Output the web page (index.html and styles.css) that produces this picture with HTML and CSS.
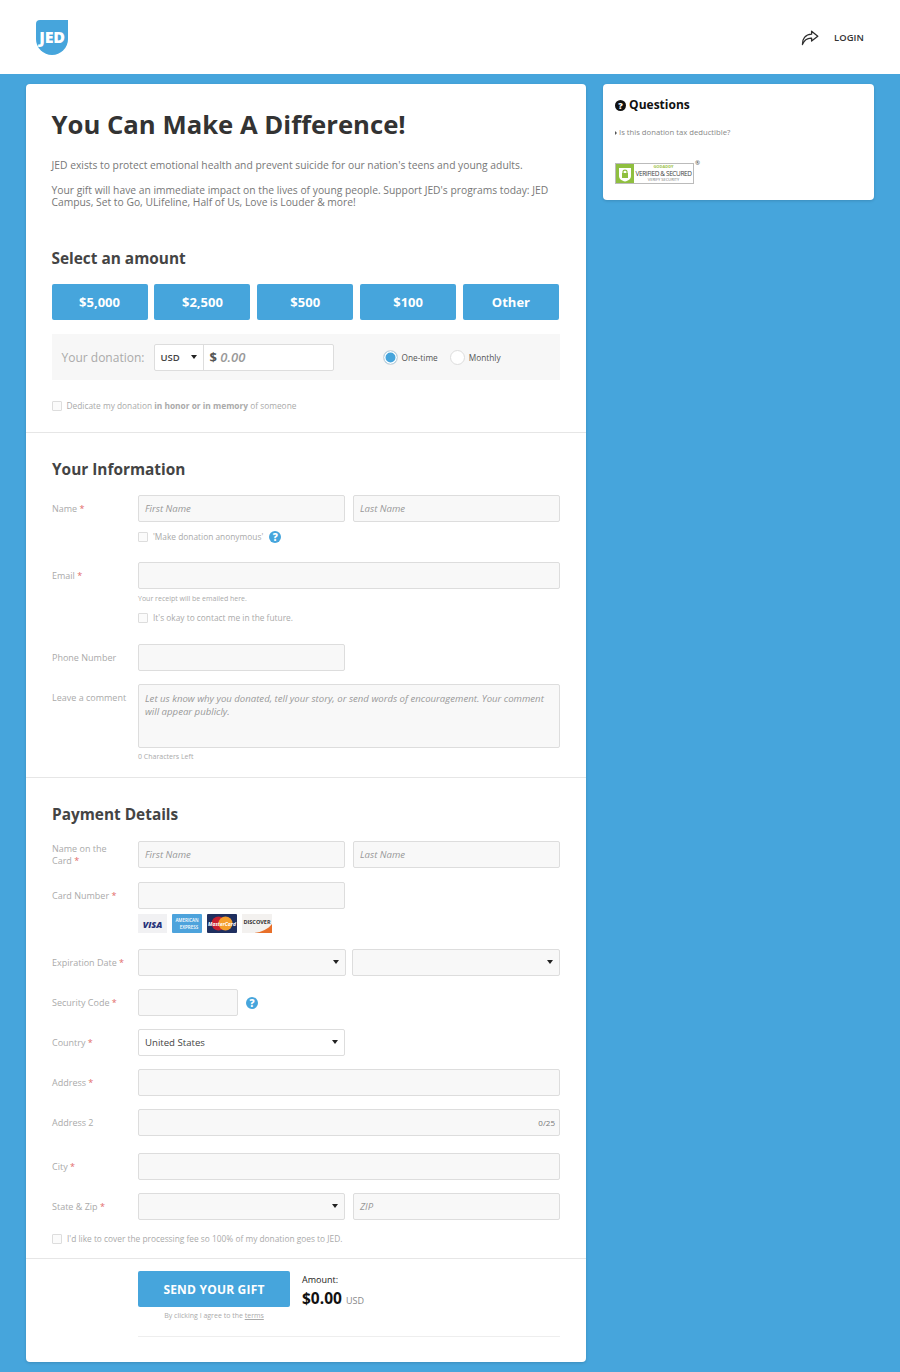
FILE: index.html
```html
<!DOCTYPE html>
<html lang="en">
<head>
    <meta charset="UTF-8">
    <meta name="viewport" content="width=device-width, initial-scale=1.0">
    <title>You Can Make A Difference!</title>
    <link rel="stylesheet" href="styles.css">
</head>
<body>

    <header class="top-bar">
        <div class="logo"><span>JED</span></div>
        <div class="top-links">
            <svg class="share-icon" width="18" height="16" viewBox="0 0 18 16">
                <path d="M10.6 1.2 L16.8 6.3 L10.6 11 L10.6 8.2 C6.6 8 3.4 9.6 1.4 14.6 C1 9 4.4 4.4 10.6 4.2 Z" fill="none" stroke="#2d2d2d" stroke-width="1.3" stroke-linejoin="round"/>
            </svg>
            <a class="login-link">LOGIN</a>
        </div>
    </header>

    <div class="page">
        <main class="card main-card">
            <section class="intro">
                <h1>You Can Make A Difference!</h1>
                <p>JED exists to protect emotional health and prevent suicide for our nation's teens and young adults.</p>
                <p>Your gift will have an immediate impact on the lives of young people. Support JED's programs today: JED Campus, Set to Go, ULifeline, Half of Us, Love is Louder &amp; more!</p>

                <h2 class="amount-title">Select an amount</h2>
                <div class="amounts">
                    <button class="amount-btn">$5,000</button>
                    <button class="amount-btn">$2,500</button>
                    <button class="amount-btn">$500</button>
                    <button class="amount-btn">$100</button>
                    <button class="amount-btn">Other</button>
                </div>

                <div class="donation-box">
                    <span class="donation-label">Your donation:</span>
                    <div class="donation-input">
                        <div class="currency">USD <i class="caret"></i></div>
                        <div class="donation-value"><b>$</b> <em>0.00</em></div>
                    </div>
                    <div class="frequency">
                        <span class="radio radio-on"></span><span class="radio-label">One-time</span>
                        <span class="radio"></span><span class="radio-label">Monthly</span>
                    </div>
                </div>

                <label class="check dedicate"><span class="box"></span><span>Dedicate my donation <b>in honor or in memory</b> of someone</span></label>
            </section>

            <section class="info">
                <h2>Your Information</h2>

                <div class="row">
                    <label class="field-label">Name <i>*</i></label>
                    <div class="field-pair">
                        <div class="input ph">First Name</div>
                        <div class="input ph">Last Name</div>
                    </div>
                </div>
                <label class="check check-anon"><span class="box"></span><span>'Make donation anonymous'</span><span class="help">?</span></label>

                <div class="row row-email">
                    <label class="field-label">Email <i>*</i></label>
                    <div class="input"></div>
                </div>
                <div class="hint hint-email">Your receipt will be emailed here.</div>
                <label class="check check-contact"><span class="box"></span><span>It's okay to contact me in the future.</span></label>

                <div class="row row-phone">
                    <label class="field-label">Phone Number</label>
                    <div class="input half"></div>
                </div>

                <div class="row row-comment">
                    <label class="field-label">Leave a comment</label>
                    <div class="input textarea ph">Let us know why you donated, tell your story, or send words of encouragement. Your comment will appear publicly.</div>
                </div>
                <div class="hint hint-chars">0 Characters Left</div>
            </section>

            <section class="payment">
                <h2>Payment Details</h2>

                <div class="row">
                    <label class="field-label label-wrap">Name on the<br>Card <i>*</i></label>
                    <div class="field-pair">
                        <div class="input ph">First Name</div>
                        <div class="input ph">Last Name</div>
                    </div>
                </div>

                <div class="row row-card">
                    <label class="field-label">Card Number <i>*</i></label>
                    <div class="input half"></div>
                </div>
                <div class="card-logos">
                    <svg width="29" height="19" viewBox="0 0 29 19">
                        <rect width="29" height="19" fill="#f1f1f3"/>
                        <text class="logo-visa" x="14.5" y="13.5" text-anchor="middle">VISA</text>
                    </svg>
                    <svg width="30" height="19" viewBox="0 0 30 19">
                        <rect width="30" height="19" rx="1" fill="#4da3dc"/>
                        <text class="logo-amex" x="15" y="8" text-anchor="middle">AMERICAN</text>
                        <text class="logo-amex" x="17" y="15" text-anchor="middle">EXPRESS</text>
                    </svg>
                    <svg width="30" height="19" viewBox="0 0 30 19">
                        <rect width="30" height="19" rx="1" fill="#1f2f5f"/>
                        <circle cx="11.5" cy="9.5" r="7" fill="#c9202f"/>
                        <circle cx="18.5" cy="9.5" r="7" fill="#f59e2c"/>
                        <text class="logo-mc" x="15" y="11.5" text-anchor="middle">MasterCard</text>
                    </svg>
                    <svg width="30" height="19" viewBox="0 0 30 19">
                        <rect width="30" height="19" fill="#f3f1ef"/>
                        <path d="M30 10 L30 19 L12 19 C20 18 26 15 30 10 Z" fill="#e8702a"/>
                        <text class="logo-disc" x="15" y="9.5" text-anchor="middle">DISCOVER</text>
                    </svg>
                </div>

                <div class="row row-exp">
                    <label class="field-label">Expiration Date <i>*</i></label>
                    <div class="field-pair pair-tight">
                        <div class="input select"><i class="caret"></i></div>
                        <div class="input select"><i class="caret"></i></div>
                    </div>
                </div>

                <div class="row row-next">
                    <label class="field-label">Security Code <i>*</i></label>
                    <div class="input cvv"></div>
                    <span class="help help-cvv">?</span>
                </div>

                <div class="row row-next">
                    <label class="field-label">Country <i>*</i></label>
                    <div class="input half select country">United States <i class="caret"></i></div>
                </div>

                <div class="row row-next">
                    <label class="field-label">Address <i>*</i></label>
                    <div class="input"></div>
                </div>

                <div class="row row-next">
                    <label class="field-label">Address 2</label>
                    <div class="input counted"><span>0/25</span></div>
                </div>

                <div class="row row-city">
                    <label class="field-label">City <i>*</i></label>
                    <div class="input"></div>
                </div>

                <div class="row row-next">
                    <label class="field-label">State &amp; Zip <i>*</i></label>
                    <div class="field-pair">
                        <div class="input select"><i class="caret"></i></div>
                        <div class="input ph">ZIP</div>
                    </div>
                </div>

                <label class="check check-fee"><span class="box"></span><span>I'd like to cover the processing fee so 100% of my donation goes to JED.</span></label>
            </section>

            <section class="submit">
                <div class="submit-row">
                    <div>
                        <button class="send-btn">SEND YOUR GIFT</button>
                        <div class="terms">By clicking I agree to the <u>terms</u></div>
                    </div>
                    <div class="total">
                        <div class="total-label">Amount:</div>
                        <div class="total-value"><b>$0.00</b> <span>USD</span></div>
                    </div>
                </div>
                <div class="submit-line"></div>
            </section>
        </main>

        <aside class="card side-card">
            <h3><span class="help help-dark">?</span> Questions</h3>
            <a class="faq"><i class="faq-arrow"></i>Is this donation tax deductible?</a>
            <div class="seal">
                <div class="seal-lock">
                    <svg width="14" height="16" viewBox="0 0 14 16">
                        <path d="M1 2 L13 2 L13 10 C13 13 10 15 7 15.5 C4 15 1 13 1 10 Z" fill="#fff"/>
                        <rect x="4" y="7" width="6" height="5" fill="#8fbf3f"/>
                        <path d="M5 7 L5 5.4 C5 3.6 9 3.6 9 5.4 L9 7" fill="none" stroke="#8fbf3f" stroke-width="1.2"/>
                    </svg>
                </div>
                <div class="seal-text">
                    <span class="seal-top">GODADDY</span>
                    <span class="seal-mid">VERIFIED &amp; SECURED</span>
                    <span class="seal-bot">VERIFY SECURITY</span>
                </div>
                <span class="seal-reg">®</span>
            </div>
        </aside>
    </div>

</body>
</html>
```

FILE: styles.css
```css
* {
    box-sizing: border-box;
}

body {
    margin: 0;
    font-family: "Open Sans", sans-serif;
    background-color: #46a5dc;
    color: #777;
}

h1, h2, h3, p {
    margin: 0;
}

button {
    font-family: inherit;
    border: none;
}

.top-bar {
    height: 74px;
    background-color: #fff;
    display: flex;
    justify-content: space-between;
    padding: 20px 36px 0 36px;
}

.logo {
    width: 32px;
    height: 35px;
    background-color: #46a5dc;
    border-radius: 4px 0 16px 16px;
    display: flex;
    align-items: center;
    justify-content: center;
    padding-bottom: 2px;
}

.logo span {
    color: #fff;
    font-size: 16px;
    font-weight: 800;
    letter-spacing: -0.2px;
}

.top-links {
    display: flex;
    align-items: flex-start;
    padding-top: 10px;
}

.login-link {
    margin-left: 15px;
    font-size: 9.4px;
    font-weight: 600;
    line-height: 15px;
    color: #333;
    letter-spacing: 0.1px;
}

.page {
    display: flex;
    align-items: flex-start;
    padding: 10px 26px;
    gap: 17px;
}

.card {
    background-color: #fff;
    border-radius: 4px;
    box-shadow: 0 1px 3px rgba(0, 0, 0, 0.15);
}

.main-card {
    width: 560px;
    height: 1278px;
}

.side-card {
    width: 271px;
    height: 116px;
    padding: 13px 12px 0 12px;
}

.intro {
    height: 349px;
    padding: 23px 26px 0 25.5px;
    border-bottom: 1px solid #e6e6e6;
}

.intro h1 {
    font-size: 25.7px;
    line-height: 36px;
    font-weight: 700;
    color: #333;
    margin-bottom: 16px;
}

.intro p {
    font-size: 10.3px;
    line-height: 12px;
    color: #777;
    margin-bottom: 13px;
}

h2 {
    font-size: 15.4px;
    line-height: 22px;
    font-weight: 700;
    color: #444;
}

.amount-title {
    margin-top: 40px;
}

.amounts {
    display: flex;
    gap: 6.75px;
    margin-top: 14px;
    margin-right: 1px;
}

.amount-btn {
    flex: 1;
    height: 36px;
    background-color: #46a5dc;
    color: #fff;
    font-size: 13px;
    font-weight: 700;
    border-radius: 2px;
}

.donation-box {
    display: flex;
    align-items: center;
    height: 46px;
    margin-top: 14px;
    padding: 0 10px;
    background-color: #f7f7f7;
}

.donation-label {
    width: 92px;
    font-size: 12px;
    color: #aaa;
}

.donation-input {
    display: flex;
    width: 180px;
    height: 27px;
    background-color: #fff;
    border: 1px solid #ddd;
    border-radius: 2px;
}

.currency {
    width: 49px;
    font-size: 9.5px;
    font-weight: 600;
    color: #444;
    line-height: 25px;
    padding-left: 6px;
    border-right: 1px solid #ddd;
    position: relative;
}

.currency .caret {
    right: 6px;
    top: 10px;
}

.donation-value {
    font-size: 13px;
    line-height: 25px;
    padding-left: 6px;
    color: #555;
}

.donation-value em {
    color: #999;
    font-weight: 600;
}

.frequency {
    display: flex;
    align-items: center;
    margin-left: 49px;
}

.radio {
    width: 15px;
    height: 15px;
    border-radius: 50%;
    background-color: #fff;
    border: 1px solid #ddd;
    margin-right: 4px;
}

.radio-on {
    background-color: #46a5dc;
    box-shadow: inset 0 0 0 1.5px #fff;
}

.radio-label {
    font-size: 8.3px;
    color: #555;
    margin-right: 12px;
}

.caret {
    position: absolute;
    width: 0;
    height: 0;
    border-left: 3.5px solid transparent;
    border-right: 3.5px solid transparent;
    border-top: 4px solid #222;
}

.check {
    display: flex;
    align-items: center;
    font-size: 8.35px;
    line-height: 12px;
    color: #aaa;
}

.box {
    width: 10px;
    height: 10px;
    border: 1px solid #ddd;
    border-radius: 1px;
    background-color: #fbfbfb;
    margin-right: 5px;
    flex: none;
}

.dedicate {
    margin-top: 20px;
}

.info {
    height: 345px;
    padding: 26px 26px 0 26px;
    border-bottom: 1px solid #e6e6e6;
}

.info h2 {
    margin-bottom: 14px;
}

.row {
    display: flex;
    align-items: flex-start;
}

.field-label {
    width: 86px;
    flex: none;
    font-size: 9px;
    line-height: 12px;
    color: #aaa;
    padding-top: 8px;
}

.field-label i {
    color: #e26a6a;
    font-style: normal;
}

.label-wrap {
    padding-top: 2px;
}

.field-pair {
    display: flex;
    gap: 8px;
    flex: 1;
}

.pair-tight {
    gap: 6px;
}

.input {
    flex: 1;
    height: 27px;
    background-color: #f8f8f8;
    border: 1px solid #ddd;
    border-radius: 2px;
    font-size: 9.6px;
    line-height: 26px;
    padding: 0 6px;
    position: relative;
}

.half {
    flex: none;
    width: 207px;
}

.cvv {
    flex: none;
    width: 100px;
}

.ph {
    color: #999;
    font-style: italic;
}

.textarea {
    height: 64px;
    line-height: 13px;
    padding-top: 7px;
}

.select .caret {
    right: 6px;
    top: 10px;
}

.country {
    background-color: #fff;
    color: #444;
}

.counted {
    text-align: right;
    font-size: 8px;
    padding-right: 4px;
    color: #777;
}

.check-anon {
    margin: 9px 0 0 86px;
}

.row-email {
    margin-top: 19px;
}

.hint {
    font-size: 7px;
    line-height: 10px;
    color: #aaa;
    margin-left: 86px;
}

.hint-email {
    margin-top: 5px;
}

.check-contact {
    margin: 8px 0 0 86px;
}

.row-phone {
    margin-top: 20px;
}

.row-comment {
    margin-top: 13px;
}

.hint-chars {
    margin-top: 4px;
}

.help {
    display: inline-block;
    width: 12px;
    height: 12px;
    margin-left: 6px;
    border-radius: 50%;
    background-color: #46a5dc;
    color: #fff;
    font-size: 10px;
    line-height: 12px;
    font-weight: 800;
    text-align: center;
}

.help-cvv {
    margin: 8px 0 0 8px;
}

.help-dark {
    margin-left: 0;
    width: 11px;
    height: 11px;
    line-height: 11px;
    background-color: #111;
    font-size: 9px;
}

.payment {
    height: 481px;
    padding: 26px 26px 0 26px;
    border-bottom: 1px solid #e6e6e6;
}

.payment h2 {
    margin-bottom: 15px;
}

.row-card {
    margin-top: 14px;
}

.card-logos {
    display: flex;
    gap: 5px;
    margin: 5px 0 0 86px;
}

.logo-visa {
    font: italic 800 9px "Open Sans", sans-serif;
    fill: #27337a;
}

.logo-amex {
    font: 600 4.5px "Open Sans", sans-serif;
    fill: #fff;
}

.logo-mc {
    font: italic 700 5px "Open Sans", sans-serif;
    fill: #fff;
}

.logo-disc {
    font: 700 5.5px "Open Sans", sans-serif;
    fill: #333;
}

.row-exp {
    margin-top: 16px;
}

.row-next {
    margin-top: 13px;
}

.row-city {
    margin-top: 17px;
}

.check-fee {
    margin-top: 13px;
}

.submit {
    padding: 12px 26px 0 112px;
}

.submit-row {
    display: flex;
    align-items: flex-start;
}

.send-btn {
    display: block;
    width: 152px;
    height: 36px;
    background-color: #46a5dc;
    color: #fff;
    font-size: 12px;
    font-weight: 700;
    border-radius: 2px;
    letter-spacing: 0.2px;
}

.terms {
    text-align: center;
    font-size: 7px;
    line-height: 10px;
    margin-top: 4px;
    color: #aaa;
}

.total {
    margin-left: 12px;
    padding-top: 3px;
}

.total-label {
    font-size: 9px;
    line-height: 12px;
    color: #222;
}

.total-value {
    line-height: 22px;
    margin-top: 1px;
}

.total-value b {
    font-size: 15.5px;
    color: #111;
}

.total-value span {
    font-size: 9px;
    color: #888;
}

.submit-line {
    height: 1px;
    margin-top: 15px;
    background-color: #eee;
}

.side-card h3 {
    font-size: 12px;
    line-height: 16px;
    font-weight: 700;
    color: #111;
}

.faq {
    display: block;
    margin-top: 14px;
    font-size: 7.7px;
    line-height: 10px;
    color: #888;
}

.faq-arrow {
    display: inline-block;
    border-left: 2.5px solid #555;
    border-top: 2.5px solid transparent;
    border-bottom: 2.5px solid transparent;
    margin-right: 2px;
}

.seal {
    display: flex;
    width: 79px;
    height: 21px;
    margin-top: 26px;
    border: 1px solid #bbb;
    background-color: #fff;
    position: relative;
}

.seal-lock {
    width: 18px;
    background-color: #8fbf3f;
    display: flex;
    align-items: center;
    justify-content: center;
}

.seal-text {
    flex: 1;
    display: flex;
    flex-direction: column;
    align-items: center;
    white-space: nowrap;
}

.seal-top {
    font-size: 4px;
    line-height: 6px;
    font-weight: 700;
    color: #9cc24a;
}

.seal-mid {
    font-size: 6.5px;
    line-height: 7px;
    letter-spacing: -0.4px;
    color: #444;
}

.seal-bot {
    font-size: 4px;
    line-height: 6px;
    color: #777;
}

.seal-reg {
    position: absolute;
    right: -7px;
    top: -5px;
    font-size: 6px;
    line-height: 8px;
    color: #444;
}
```
